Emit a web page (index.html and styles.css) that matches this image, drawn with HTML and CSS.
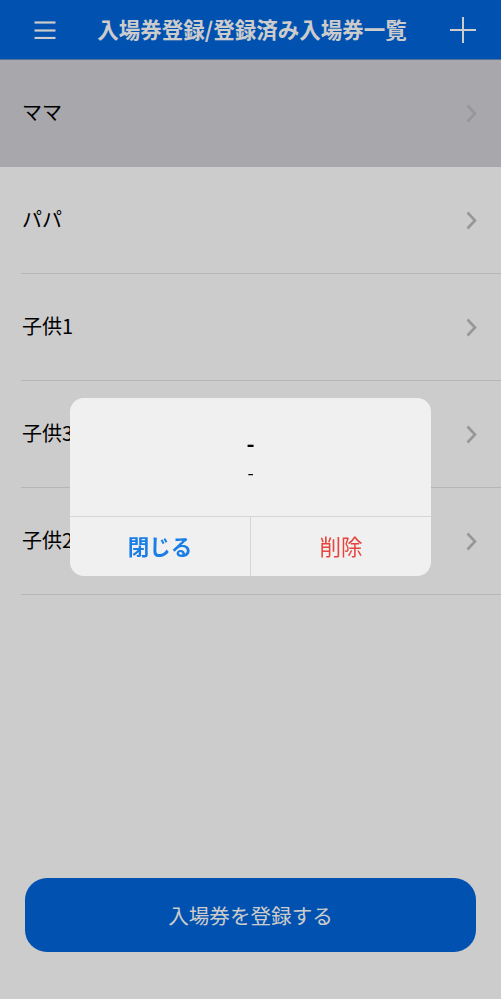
FILE: index.html
```html
<!DOCTYPE html>
<html lang="ja">
<head>
<meta charset="utf-8">
<title>入場券登録/登録済み入場券一覧</title>
<link rel="stylesheet" href="styles.css">
</head>
<body>
<div class="app">
  <header class="topbar">
    <button class="icon-btn" aria-label="メニュー">
      <svg width="22" height="18" viewBox="0 0 22 18"><g stroke="#fff" stroke-width="2.2" stroke-linecap="butt"><line x1="0.5" y1="1.5" x2="21.5" y2="1.5"/><line x1="0.5" y1="9.5" x2="21.5" y2="9.5"/><line x1="0.5" y1="17" x2="21.5" y2="17"/></g></svg>
    </button>
    <h1 class="title">入場券登録/登録済み入場券一覧</h1>
    <button class="icon-btn" aria-label="追加">
      <svg width="26" height="26" viewBox="0 0 26 26"><g stroke="#fff" stroke-width="2"><line x1="13" y1="0" x2="13" y2="26"/><line x1="0" y1="13" x2="26" y2="13"/></g></svg>
    </button>
  </header>

  <ul class="list">
    <li class="row row-active"><div class="row-inner"><span class="row-label">ママ</span><svg class="chev" width="11" height="19" viewBox="0 0 11 19"><polyline points="1.5,1.5 9,9.5 1.5,17.5" fill="none" stroke="#bdbdc1" stroke-width="2.6"/></svg></div></li>
    <li class="row"><div class="row-inner"><span class="row-label">パパ</span><svg class="chev" width="11" height="19" viewBox="0 0 11 19"><polyline points="1.5,1.5 9,9.5 1.5,17.5" fill="none" stroke="#bdbdc1" stroke-width="2.6"/></svg></div></li>
    <li class="row"><div class="row-inner"><span class="row-label">子供1</span><svg class="chev" width="11" height="19" viewBox="0 0 11 19"><polyline points="1.5,1.5 9,9.5 1.5,17.5" fill="none" stroke="#bdbdc1" stroke-width="2.6"/></svg></div></li>
    <li class="row"><div class="row-inner"><span class="row-label">子供3</span><svg class="chev" width="11" height="19" viewBox="0 0 11 19"><polyline points="1.5,1.5 9,9.5 1.5,17.5" fill="none" stroke="#bdbdc1" stroke-width="2.6"/></svg></div></li>
    <li class="row"><div class="row-inner"><span class="row-label">子供2</span><svg class="chev" width="11" height="19" viewBox="0 0 11 19"><polyline points="1.5,1.5 9,9.5 1.5,17.5" fill="none" stroke="#bdbdc1" stroke-width="2.6"/></svg></div></li>
  </ul>

  <div class="footer">
    <button class="primary-btn">入場券を登録する</button>
  </div>
</div>

<div class="overlay">
  <div class="dialog" role="alertdialog">
    <div class="dialog-body">
      <div class="dialog-title">-</div>
      <div class="dialog-msg">-</div>
    </div>
    <div class="dialog-actions">
      <button class="dialog-btn btn-close">閉じる</button>
      <button class="dialog-btn btn-delete">削除</button>
    </div>
  </div>
</div>
</body>
</html>
```

FILE: styles.css
```css
* { box-sizing: border-box; }
html, body { margin: 0; padding: 0; height: 100%; }
body {
  font-family: "Noto Sans CJK JP", "Noto Sans", sans-serif;
  background: #ffffff;
  color: #000;
}
button { font-family: inherit; border: 0; background: none; padding: 0; margin: 0; cursor: pointer; }

.app {
  display: flex;
  flex-direction: column;
  height: 100vh;
}

.topbar {
  height: 60px;
  flex: none;
  background: #0166dc;
  border-bottom: 1px solid #6e8fc0;
  display: flex;
  align-items: center;
  padding: 0 25px 0 34px;
}
.icon-btn {
  display: flex;
  align-items: center;
  justify-content: center;
  height: 40px;
}
.title {
  flex: 1;
  margin: 0;
  text-align: center;
  color: #fff;
  font-size: 21.5px;
  font-weight: 700;
  line-height: 1;
  padding-right: 2px;
  margin-top: -1px;
}

.list {
  list-style: none;
  margin: 0;
  padding: 0;
}
.row {
  height: 107px;
  background: #fff;
}
.row-active { background: #d3d2d8; }
.row-inner {
  height: 100%;
  margin-left: 21px;
  padding: 0 24px 0 1px;
  border-bottom: 1px solid #e4e4e4;
  display: flex;
  align-items: center;
  justify-content: space-between;
}
.row-active .row-inner { border-bottom-color: transparent; }
.row-label {
  font-size: 20px;
  line-height: 1;
  margin-top: -2px;
}
.chev { display: block; }

.footer {
  margin-top: auto;
  padding: 0 25px 47px;
}
.primary-btn {
  width: 100%;
  height: 74px;
  border-radius: 22px;
  background: #0166dc;
  color: #fff;
  font-size: 20.6px;
  line-height: 1;
}

.overlay {
  position: fixed;
  inset: 0;
  background: rgba(0, 0, 0, 0.2);
  display: flex;
  align-items: center;
  justify-content: center;
  padding-bottom: 25px;
}
.dialog {
  width: 361px;
  background: #f0f0f0;
  border-radius: 14px;
  overflow: hidden;
}
.dialog-body {
  height: 119px;
  display: flex;
  flex-direction: column;
  align-items: center;
  padding-top: 30px;
  border-bottom: 1px solid #d6d6d6;
}
.dialog-title {
  font-size: 22px;
  font-weight: 700;
  line-height: 28px;
}
.dialog-msg {
  font-size: 18px;
  line-height: 22px;
  margin-top: 5px;
}
.dialog-actions {
  display: flex;
  height: 59px;
}
.dialog-btn {
  flex: 1;
  font-size: 21.5px;
  line-height: 1;
  padding-bottom: 2px;
}
.btn-close {
  color: #1a7ee6;
  font-weight: 700;
  border-right: 1px solid #d6d6d6;
}
.btn-delete {
  color: #e5453c;
}
```
